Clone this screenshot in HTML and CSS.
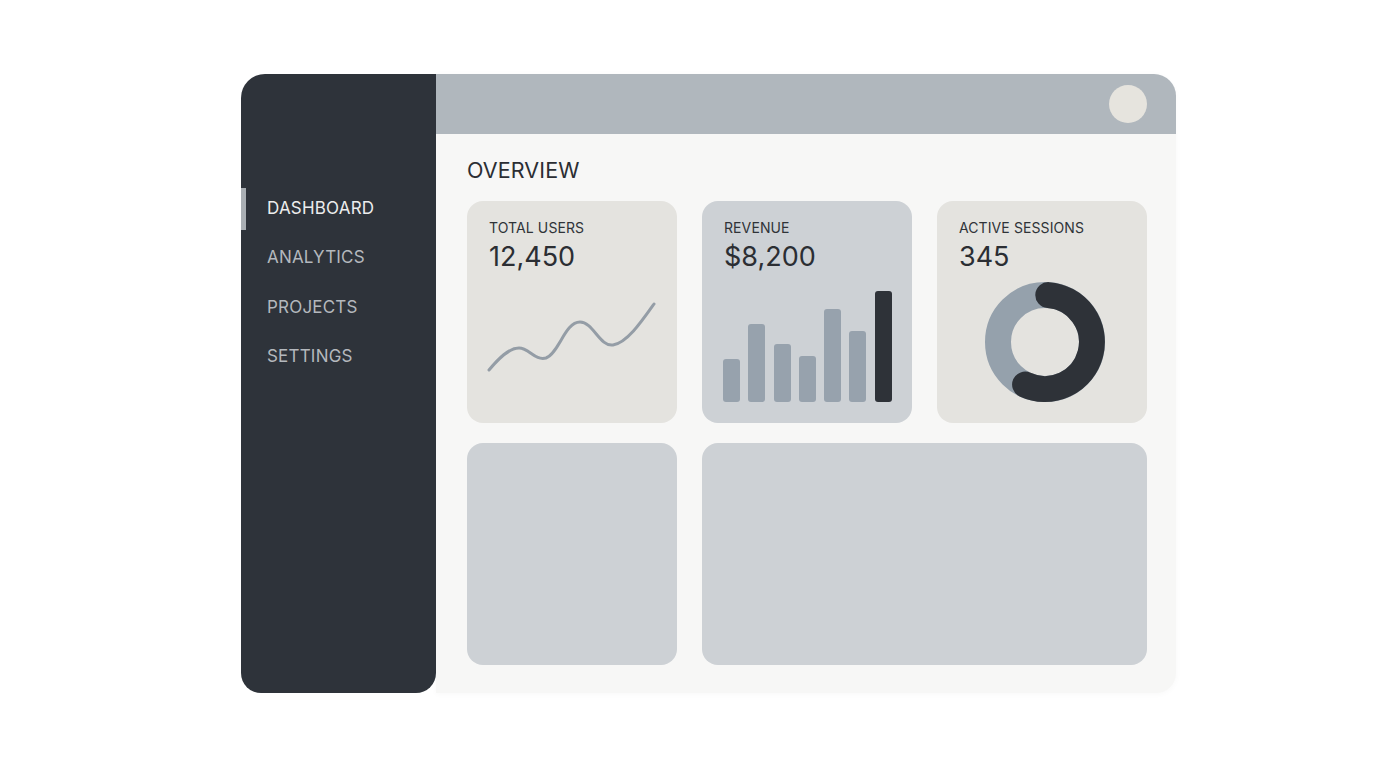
FILE: index.html
```html
<!DOCTYPE html>
<html lang="en">
<head>
<meta charset="utf-8">
<title>Dashboard</title>
<link rel="stylesheet" href="styles.css">
</head>
<body>
<div class="frame">
  <aside class="sidebar">
    <nav class="nav">
      <a class="nav-item active">DASHBOARD</a>
      <a class="nav-item">ANALYTICS</a>
      <a class="nav-item">PROJECTS</a>
      <a class="nav-item">SETTINGS</a>
    </nav>
  </aside>
  <main class="main">
    <header class="topbar">
      <div class="avatar"></div>
    </header>
    <section class="content">
      <h1 class="title">OVERVIEW</h1>
      <div class="grid">
        <div class="card card-warm">
          <div class="card-label">TOTAL USERS</div>
          <div class="card-value">12,450</div>
          <svg class="chart" viewBox="0 0 210 222" width="210" height="222">
            <path d="M22 169 C32 157 42 147 52 147 C62 147 68 160 79 157 C92 152 98 121 113 121 C126 121 133 146 146 144 C160 142 175 120 187 103" fill="none" stroke="#949da6" stroke-width="3" stroke-linecap="round"/>
          </svg>
        </div>
        <div class="card card-cool">
          <div class="card-label">REVENUE</div>
          <div class="card-value">$8,200</div>
          <div class="bars">
            <span class="bar" style="height:43px"></span>
            <span class="bar" style="height:78px"></span>
            <span class="bar" style="height:58px"></span>
            <span class="bar" style="height:46px"></span>
            <span class="bar" style="height:93px"></span>
            <span class="bar" style="height:71px"></span>
            <span class="bar bar-dark" style="height:111px"></span>
          </div>
        </div>
        <div class="card card-warm">
          <div class="card-label">ACTIVE SESSIONS</div>
          <div class="card-value">345</div>
          <svg class="chart" viewBox="0 0 209 222" width="209" height="222">
            <circle cx="108" cy="141" r="47" fill="none" stroke="#95a1ac" stroke-width="26"/>
            <path d="M111.3 94.1 A47 47 0 1 1 88.1 183.6" fill="none" stroke="#2e3238" stroke-width="26" stroke-linecap="round"/>
          </svg>
        </div>
        <div class="card card-cool"></div>
        <div class="card card-cool wide"></div>
      </div>
    </section>
  </main>
</div>
</body>
</html>
```
FILE: styles.css
```css
* { box-sizing: border-box; }
html, body { margin: 0; padding: 0; background: #ffffff; }
body {
  font-family: "Inter", "Liberation Sans", sans-serif;
  padding: 74px 0 0 241px;
  width: 1376px;
  height: 768px;
  overflow: hidden;
}
.frame {
  display: flex;
  width: 935px;
  height: 619px;
}
.sidebar {
  width: 195px;
  flex: none;
  background: #2e333a;
  border-radius: 24px 0 20px 20px;
  padding-top: 109px;
  position: relative;
  z-index: 1;
}
.nav { display: flex; flex-direction: column; }
.nav-item {
  position: relative;
  height: 49.5px;
  display: flex;
  align-items: center;
  padding-left: 26px;
  font-size: 17px;
  letter-spacing: 0.2px;
  color: #b4b8bd;
}
.nav-item.active { color: #eceded; }
.nav-item.active::before {
  content: "";
  position: absolute;
  left: 0;
  top: 5px;
  width: 5px;
  height: 42px;
  background: #a9aeb3;
}
.main {
  flex: 1;
  background: #f7f7f6;
  border-radius: 0 24px 20px 0;
  box-shadow: 0 1px 6px rgba(0,0,0,0.03);
  display: flex;
  flex-direction: column;
}
.topbar {
  height: 60px;
  background: #b0b7bd;
  border-radius: 0 22px 0 0;
  display: flex;
  align-items: center;
  justify-content: flex-end;
  padding-right: 29px;
}
.avatar {
  width: 38px;
  height: 38px;
  border-radius: 50%;
  background: #e6e4de;
}
.content {
  padding: 21px 29px 28px 31px;
  flex: 1;
  display: flex;
  flex-direction: column;
}
.title {
  margin: 0 0 15px;
  font-size: 21.5px;
  font-weight: 400;
  color: #2b2e33;
  line-height: 31px;
  letter-spacing: 0.1px;
}
.grid {
  display: grid;
  grid-template-columns: repeat(3, 1fr);
  grid-template-rows: 222px 222px;
  column-gap: 25px;
  row-gap: 20px;
}
.card {
  position: relative;
  border-radius: 16px;
  padding: 18px 22px 0;
  overflow: hidden;
}
.card-warm { background: #e4e3df; }
.card-cool { background: #cdd1d5; }
.wide { grid-column: span 2; }
.card-label {
  font-size: 14px;
  color: #2f3338;
  line-height: 18px;
  letter-spacing: 0.1px;
}
.card-value {
  font-size: 27px;
  font-weight: 400;
  color: #2b2e33;
  line-height: 36px;
  margin-top: 2px;
}
.chart {
  position: absolute;
  left: 0;
  top: 0;
}
.bars {
  position: absolute;
  left: 21px;
  bottom: 21px;
  display: flex;
  align-items: flex-end;
  gap: 8.3px;
}
.bar {
  width: 17px;
  border-radius: 3px;
  background: #97a2ad;
}
.bar-dark { background: #2e3238; }
```
